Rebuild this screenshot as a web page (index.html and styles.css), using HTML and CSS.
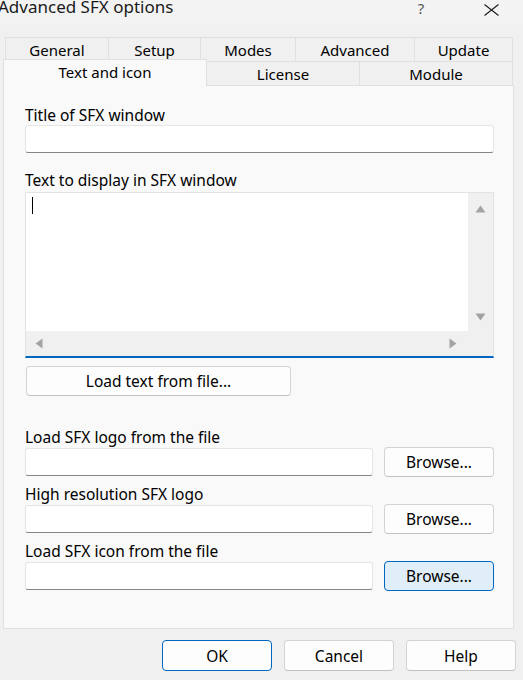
FILE: index.html
```html
<!DOCTYPE html>
<html>
<head>
<meta charset="utf-8">
<title>Advanced SFX options</title>
<link rel="stylesheet" href="styles.css">
</head>
<body>
<div class="titlebar">
  <span class="title">Advanced SFX options</span>
  <span class="help">?</span>
  <span class="close"><svg width="15" height="12" viewBox="0 0 15 12"><path d="M0.5 0.5 L14.5 11.5 M14.5 0.5 L0.5 11.5" stroke="#1a1a1a" stroke-width="1.1" fill="none"/></svg></span>
</div>
<div class="tabs">
  <div class="tabrow back">
    <div class="tab first w-general">General</div>
    <div class="tab w-setup">Setup</div>
    <div class="tab w-modes">Modes</div>
    <div class="tab w-advanced">Advanced</div>
    <div class="tab w-update">Update</div>
  </div>
  <div class="tabrow front">
    <div class="tab first selected w-text">Text and icon</div>
    <div class="tab w-license">License</div>
    <div class="tab w-module">Module</div>
  </div>
</div>
<div class="panel">
  <div class="label">Title of SFX window</div>
  <div class="input title-input"></div>
  <div class="label label-gap">Text to display in SFX window</div>
  <div class="textbox">
    <div class="textarea"><span class="caret"></span></div>
    <div class="vscroll">
      <svg width="11" height="8" viewBox="0 0 11 8"><path d="M5.5 0.5 L10.5 7.5 L0.5 7.5 Z" fill="#a3a3a3"/></svg>
      <svg width="11" height="8" viewBox="0 0 11 8"><path d="M0.5 0.5 L10.5 0.5 L5.5 7.5 Z" fill="#a3a3a3"/></svg>
    </div>
    <div class="hscroll">
      <svg width="8" height="11" viewBox="0 0 8 11"><path d="M0.5 5.5 L7.5 0.5 L7.5 10.5 Z" fill="#a3a3a3"/></svg>
      <svg width="8" height="11" viewBox="0 0 8 11"><path d="M0.5 0.5 L7.5 5.5 L0.5 10.5 Z" fill="#a3a3a3"/></svg>
    </div>
    <div class="corner"></div>
  </div>
  <button class="btn loadbtn">Load text from file...</button>

  <div class="label field-first">Load SFX logo from the file</div>
  <div class="row">
    <div class="input path"></div>
    <button class="btn browse">Browse...</button>
  </div>
  <div class="label field-next">High resolution SFX logo</div>
  <div class="row">
    <div class="input path"></div>
    <button class="btn browse">Browse...</button>
  </div>
  <div class="label field-next">Load SFX icon from the file</div>
  <div class="row">
    <div class="input path"></div>
    <button class="btn browse active">Browse...</button>
  </div>
</div>
<div class="footer">
  <button class="btn dlg default">OK</button>
  <button class="btn dlg">Cancel</button>
  <button class="btn dlg">Help</button>
</div>
</body>
</html>
```
FILE: styles.css
```css
* { box-sizing: border-box; }
html, body { margin: 0; padding: 0; }
body {
  width: 523px;
  height: 680px;
  overflow: hidden;
  background: #f0f0f0;
  font-family: "Noto Sans", "DejaVu Sans", sans-serif;
  font-size: 15.5px;
  color: #000;
}

/* title bar */
.titlebar {
  height: 24px;
  background: #f3f3f3;
  display: flex;
  align-items: flex-start;
}
.title {
  flex: 1;
  font-size: 17px;
  line-height: 16px;
  margin-top: -1px;
  margin-left: -2px;
  color: #1a1a1a;
  white-space: nowrap;
}
.help {
  width: 46px;
  text-align: center;
  font-size: 15px;
  line-height: 16px;
  color: #555;
}
.close {
  width: 64px;
  margin-left: 15px;
  display: flex;
  justify-content: center;
  padding-top: 4px;
}

/* tabs */
.tabs { margin-top: 13px; }
.tabrow {
  display: flex;
  align-items: flex-start;
  height: 24px;
}
.tabrow.back { margin-left: 5px; }
.tabrow.front { margin-left: 3px; }
.tab {
  height: 24px;
  border: 1px solid #e0e0e0;
  border-left: none;
  border-bottom: none;
  background: #f0f0f0;
  display: flex;
  align-items: center;
  justify-content: center;
  font-size: 15px;
  line-height: 20px;
  white-space: nowrap;
}
.tab.first { border-left: 1px solid #e0e0e0; }
.tab.selected {
  height: 27px;
  margin-top: -2px;
  padding-bottom: 3px;
  background: #f9f9f9;
  position: relative;
  z-index: 1;
}
.w-general { width: 104px; }
.w-setup { width: 92px; }
.w-modes { width: 95px; }
.w-advanced { width: 119px; }
.w-update { width: 98px; }
.w-text { width: 204px; }
.w-license { width: 153px; }
.w-module { width: 153px; }

/* panel */
.panel {
  margin-left: 3px;
  width: 511px;
  height: 544px;
  border: 1px solid #e0e0e0;
  background: #f9f9f9;
  padding: 19px 19px 0 21px;
}
.label {
  height: 20px;
  line-height: 20px;
  white-space: nowrap;
}
.label-gap { margin-top: 17px; }
.field-first { margin-top: 31px; }
.field-next { margin-top: 7px; }

.input {
  height: 28px;
  background: #fff;
  border: 1px solid #e5e5e5;
  border-bottom-color: #868686;
  border-radius: 3px;
}

.textbox {
  margin-top: 2px;
  height: 166px;
  border: 1px solid #e3e3e3;
  border-bottom: 2px solid #0067c0;
  display: grid;
  grid-template-columns: 1fr 25px;
  grid-template-rows: 1fr 25px;
  background: #f0f0f0;
}
.textarea {
  background: #fff;
  padding: 4px 0 0 6px;
}
.caret {
  display: block;
  width: 1px;
  height: 17px;
  background: #000;
}
.vscroll {
  display: flex;
  flex-direction: column;
  align-items: center;
  justify-content: space-between;
  padding: 12px 0 10px;
}
.hscroll {
  display: flex;
  align-items: center;
  justify-content: space-between;
  padding: 0 11px 0 9px;
}
.vscroll svg, .hscroll svg { display: block; }

/* buttons */
.btn {
  font: inherit;
  color: #000;
  padding: 0;
  margin: 0;
  height: 30px;
  background: #fdfdfd;
  border: 1px solid #d3d3d3;
  border-bottom-color: #c2c2c2;
  border-radius: 4px;
  display: flex;
  align-items: center;
  justify-content: center;
  white-space: nowrap;
}
.loadbtn {
  margin-top: 8px;
  margin-left: 1px;
  width: 265px;
}
.row {
  display: flex;
  align-items: center;
  gap: 11px;
  height: 30px;
}
.path { width: 348px; }
.browse { width: 110px; }
.browse.active {
  background: #e0eef9;
  border-color: #0067c0;
}

/* footer */
.footer {
  display: flex;
  justify-content: flex-end;
  gap: 12px;
  padding-right: 7px;
  margin-top: 11px;
}
.dlg {
  width: 110px;
  height: 31px;
}
.dlg.default { border-color: #0067c0; }
```
